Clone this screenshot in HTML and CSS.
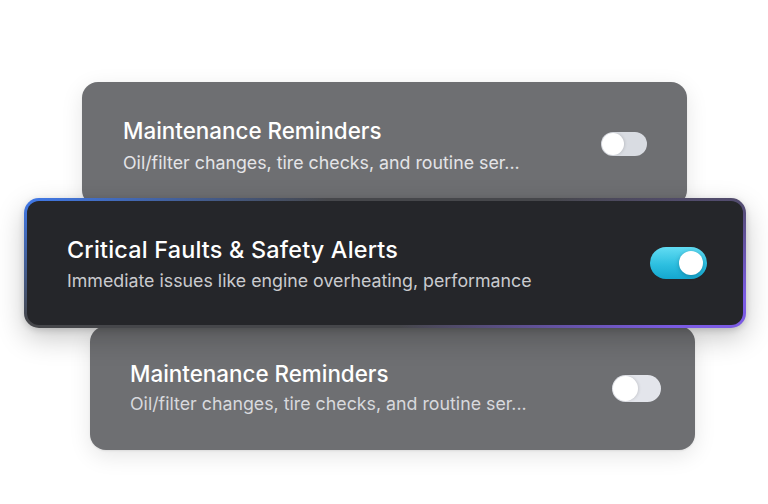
FILE: index.html
```html
<!DOCTYPE html>
<html lang="en">
<head>
<meta charset="utf-8">
<title>Notification Settings</title>
<link rel="stylesheet" href="styles.css">
</head>
<body>
<div class="stack">
  <div class="card card-back card-top">
    <div class="text">
      <div class="title">Maintenance Reminders</div>
      <div class="sub">Oil/filter changes, tire checks, and routine ser...</div>
    </div>
    <span class="toggle toggle-off toggle-sm"><span class="knob"></span></span>
  </div>
  <div class="card card-front">
    <div class="text">
      <div class="title">Critical Faults &amp; Safety Alerts</div>
      <div class="sub">Immediate issues like engine overheating, performance</div>
    </div>
    <span class="toggle toggle-on"><span class="knob"></span></span>
  </div>
  <div class="card card-back card-bottom">
    <div class="text">
      <div class="title">Maintenance Reminders</div>
      <div class="sub">Oil/filter changes, tire checks, and routine ser...</div>
    </div>
    <span class="toggle toggle-off toggle-md"><span class="knob"></span></span>
  </div>
</div>
</body>
</html>
```

FILE: styles.css
```css
* { box-sizing: border-box; }
html, body {
  margin: 0;
  background: #ffffff;
  font-family: Inter, "Noto Sans", sans-serif;
}
.stack {
  width: 768px;
  height: 504px;
  padding-top: 82px;
  display: flex;
  flex-direction: column;
  align-items: flex-start;
}
.card {
  display: flex;
  align-items: center;
  justify-content: space-between;
}
.title {
  font-size: 22.4px;
  line-height: 26px;
  font-weight: 500;
  color: #ffffff;
}
.sub {
  font-size: 17.8px;
  line-height: 22px;
  font-weight: 400;
}
.card-back {
  width: 605px;
  height: 124px;
  background: #6e6f72;
  border-radius: 16px;
  box-shadow: 0 6px 22px rgba(0, 0, 0, 0.10), 0 1px 2px rgba(0, 0, 0, 0.08);
}
.card-back .sub { color: #e4e4e7; }
.card-top {
  margin-left: 82px;
  padding: 0 40px 0 41px;
}
.card-top .text { padding-top: 4px; }
.card-top .sub { margin-top: 8.5px; }
.card-bottom {
  margin-left: 90px;
  margin-top: -2px;
  padding: 0 34px 0 40px;
}
.card-bottom .sub { margin-top: 6px; color: #d8d9dd; }
.card-front {
  position: relative;
  z-index: 2;
  width: 722px;
  height: 130px;
  margin-left: 24px;
  margin-top: -8px;
  padding: 0 36px 0 40px;
  border: 3px solid transparent;
  border-radius: 15px;
  background:
    linear-gradient(#25262a, #25262a) padding-box,
    radial-gradient(ellipse 42% 95% at 0% 0%, #4079ea 0%, rgba(64, 121, 234, 0) 100%) border-box,
    radial-gradient(ellipse 48% 120% at 100% 100%, #7b5be4 0%, #7b5be4 20%, rgba(123, 91, 228, 0) 100%) border-box,
    #46474b border-box;
  box-shadow: 0 10px 28px rgba(0, 0, 0, 0.22), 0 2px 6px rgba(0, 0, 0, 0.15);
}
.card-front .text { padding-top: 2px; }
.card-front .title {
  font-size: 23.4px;
  line-height: 27px;
  letter-spacing: 0.2px;
}
.card-front .sub { margin-top: 7px; color: #cacbcf; }

.toggle {
  display: flex;
  align-items: center;
  border-radius: 999px;
  padding: 1px;
  flex-shrink: 0;
}
.knob {
  display: block;
  border-radius: 50%;
  background: #ffffff;
}
.toggle-off { background: #d9dce2; }
.toggle-sm { width: 46px; height: 24px; }
.toggle-sm .knob { width: 22px; height: 22px; box-shadow: 1px 0 3px rgba(0,0,0,0.12); }
.toggle-md { width: 49px; height: 27px; background: #e3e5eb; }
.toggle-md .knob { width: 25px; height: 25px; box-shadow: 1px 0 3px rgba(0,0,0,0.12); }
.toggle-on {
  width: 57px;
  height: 32px;
  padding: 4px;
  justify-content: flex-end;
  background: linear-gradient(180deg, #62dcf3 0%, #2dbfe0 55%, #14a7cf 100%);
}
.toggle-on .knob {
  width: 24px;
  height: 24px;
  box-shadow: 0 1px 4px rgba(0, 60, 90, 0.35);
}
```
